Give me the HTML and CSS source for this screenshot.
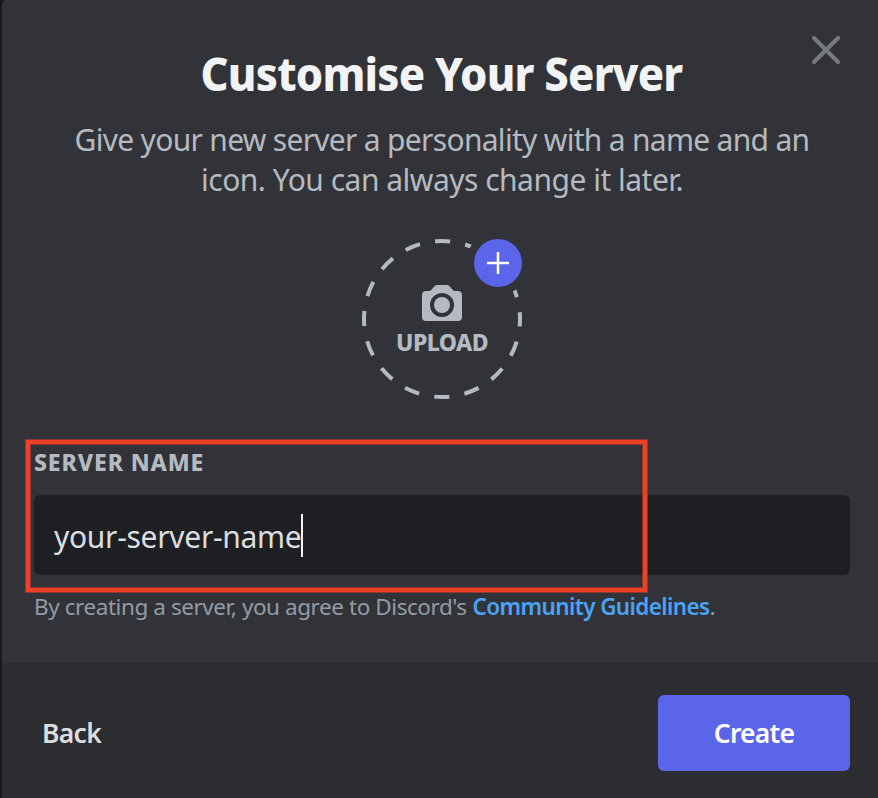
FILE: index.html
```html
<!DOCTYPE html>
<html lang="en">
<head>
<meta charset="utf-8">
<title>Customise Your Server</title>
<link rel="stylesheet" href="styles.css">
</head>
<body>
<main class="modal">
  <section class="content">
    <button class="close" aria-label="Close"><svg width="28" height="28" viewBox="0 0 28 28"><path d="M2 2 26 26M26 2 2 26"/></svg></button>
    <h1 class="title">Customise Your Server</h1>
    <p class="subtitle"><span class="line1">Give your new server a personality with a name and an</span><br><span class="line2">icon. You can always change it later.</span></p>
    <div class="upload">
      <svg class="ring" width="160" height="160" viewBox="0 0 160 160">
        <mask id="cut"><rect width="160" height="160" fill="#fff"/><circle cx="136" cy="24" r="32" fill="#000"/></mask>
        <circle class="dashes" cx="80" cy="80" r="78" mask="url(#cut)"/>
      </svg>
      <svg class="camera" width="40" height="36" viewBox="0 0 40 36"><path fill-rule="evenodd" d="M15.2 0h9.600q1.500 0 2.500 1.100L31 5.300Q31.700 6 32.800 6H36q4 0 4 4v22q0 4-4 4H4q-4 0-4-4V10q0-4 4-4h3.200Q8.300 6 9 5.300l3.700-4.200Q13.700 0 15.200 0ZM20 8a12 12 0 1 0 0 24a12 12 0 1 0 0-24Z"/><circle cx="20" cy="20" r="8"/></svg>
      <span class="upload-label">UPLOAD</span>
      <span class="badge"><svg width="22" height="22" viewBox="0 0 22 22"><path d="M11 0V22M0 11H22"/></svg></span>
    </div>
    <div class="field">
      <label class="label">SERVER NAME</label>
      <div class="input"><span class="value">your-server-name</span><i class="caret"></i></div>
      <div class="highlight"></div>
    </div>
    <p class="terms"><span class="agree">By creating a server, you agree to Discord's</span> <a>Community Guidelines</a>.</p>
  </section>
  <footer class="footer">
    <button class="back">Back</button>
    <button class="create">Create</button>
  </footer>
</main>
</body>
</html>
```
FILE: styles.css
```css
* { box-sizing: border-box; }
body { margin: 0; background: #18191c; font-family: "Noto Sans", "Open Sans", sans-serif; }
button { border: 0; padding: 0; background: none; font: inherit; }
.modal { display: flex; flex-direction: column; height: 798px; margin-left: 2px; overflow: hidden; background: #313338; border-top-left-radius: 4px; }
.content { position: relative; height: 663px; padding: 47px 28px 0 32px; }
.close { position: absolute; top: 36px; right: 38px; display: flex; }
.close path { stroke: #777b80; stroke-width: 4; stroke-linecap: round; }
.title { margin: 0; height: 52px; line-height: 52px; font-size: 46px; font-weight: 800; text-align: center; color: #f2f3f5; white-space: nowrap; letter-spacing: -0.8px; transform: translateX(-0.5px) scaleX(0.946); }
.subtitle { margin: 21px -20px 0; line-height: 40px; font-size: 30px; text-align: center; color: #b5bac1; white-space: nowrap; }
.line1 { letter-spacing: -0.7px; }
.line2 { letter-spacing: -0.5px; }
.upload { position: relative; display: flex; flex-direction: column; align-items: center; width: 160px; height: 160px; margin: 39px auto 0; padding-top: 46px; }
.ring { position: absolute; inset: 0; }
.dashes { fill: none; stroke: #b5bac1; stroke-width: 4; stroke-dasharray: 15.315 15.315; stroke-dashoffset: 7.657; }
.camera { fill: #b5bac1; }
.upload-label { margin-top: 5px; line-height: 32px; font-size: 23px; font-weight: 800; letter-spacing: -0.6px; color: #b5bac1; }
.badge { position: absolute; top: 0; right: 0; display: grid; place-items: center; width: 48px; height: 48px; border-radius: 50%; background: #5b65ea; }
.badge path { stroke: #fff; stroke-width: 2.5; }
.field { position: relative; margin-top: 48px; }
.label { display: block; height: 48px; line-height: 30px; font-size: 23px; font-weight: 800; letter-spacing: 0.9px; color: #b5bac1; }
.input { display: flex; align-items: center; height: 80px; padding-left: 20px; border-radius: 6px; background: #1e1f22; color: #dbdee1; font-size: 30px; }
.value { padding-top: 3px; line-height: 42px; letter-spacing: -0.3px; }
.caret { width: 2px; height: 43px; background: #f2f3f5; }
.highlight { position: absolute; top: -7px; left: -8px; width: 621px; height: 152px; border: 4px solid #ed4025; box-shadow: 0 0 0 1px #ed402580, inset 0 0 0 1px #ed402580; }
.terms { margin: 16px 0 0; line-height: 32px; font-size: 22.500px; color: #949ba4; white-space: nowrap; }
.agree { letter-spacing: -0.43px; }
.terms a { color: #4aa3f5; font-weight: 600; letter-spacing: -0.62px; }
.footer { display: flex; align-items: center; justify-content: space-between; height: 135px; padding: 4px 28px 0 40px; background: #2b2d31; font-size: 26.500px; font-weight: 600; }
.back { color: #dbdee1; letter-spacing: -0.7px; }
.create { width: 192px; height: 76px; border-radius: 6px; background: #5b65ea; color: #fff; letter-spacing: -0.8px; position: relative; }
```
